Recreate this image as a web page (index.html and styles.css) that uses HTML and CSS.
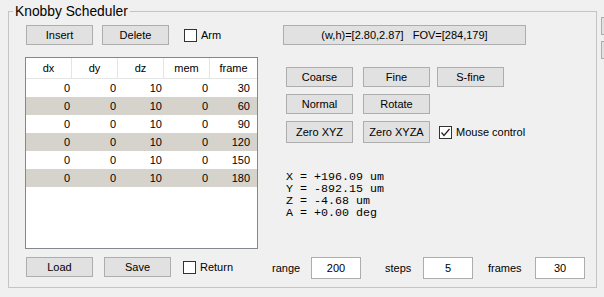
FILE: index.html
```html
<!DOCTYPE html>
<html>
<head>
<meta charset="utf-8">
<link rel="stylesheet" href="styles.css">
</head>
<body>
<div class="app">
  <div class="group">
    <span class="title">Knobby Scheduler</span>
    <div class="toprow">
      <div class="btn">Insert</div>
      <div class="btn gap9">Delete</div>
      <label class="chk armchk"><span class="box"></span>Arm</label>
      <div class="btn wide">(w,h)=[2.80,2.87]   FOV=[284,179]</div>
    </div>
    <div class="main">
      <div class="table">
        <div class="thead">
          <div class="th">dx</div><div class="th">dy</div><div class="th">dz</div><div class="th">mem</div><div class="th">frame</div>
        </div>
        <div class="tr"><div class="td">0</div><div class="td">0</div><div class="td">10</div><div class="td">0</div><div class="td last">30</div></div>
        <div class="tr alt"><div class="td">0</div><div class="td">0</div><div class="td">10</div><div class="td">0</div><div class="td last">60</div></div>
        <div class="tr"><div class="td">0</div><div class="td">0</div><div class="td">10</div><div class="td">0</div><div class="td last">90</div></div>
        <div class="tr alt"><div class="td">0</div><div class="td">0</div><div class="td">10</div><div class="td">0</div><div class="td last">120</div></div>
        <div class="tr"><div class="td">0</div><div class="td">0</div><div class="td">10</div><div class="td">0</div><div class="td last">150</div></div>
        <div class="tr alt"><div class="td">0</div><div class="td">0</div><div class="td">10</div><div class="td">0</div><div class="td last">180</div></div>
      </div>
      <div class="side">
        <div class="srow">
          <div class="btn">Coarse</div>
          <div class="btn gap10">Fine</div>
          <div class="btn gap7">S-fine</div>
        </div>
        <div class="srow">
          <div class="btn">Normal</div>
          <div class="btn gap10">Rotate</div>
        </div>
        <div class="srow tall">
          <div class="btn">Zero XYZ</div>
          <div class="btn gap10">Zero XYZA</div>
          <label class="chk mousechk"><span class="box checked"><svg width="11" height="11" viewBox="0 0 11 11"><path d="M1.5 5.5 L4 8.5 L9.5 2" fill="none" stroke="#222" stroke-width="1.2"/></svg></span>Mouse control</label>
        </div>
        <div class="readout">X = +196.09 um
Y = -892.15 um
Z = -4.68 um
A = +0.00 deg</div>
      </div>
    </div>
    <div class="bottomrow">
      <div class="btn">Load</div>
      <div class="btn gap11">Save</div>
      <label class="chk retchk"><span class="box"></span>Return</label>
      <span class="lbl lrange">range</span><div class="val">200</div>
      <span class="lbl lsteps">steps</span><div class="val">5</div>
      <span class="lbl lframes">frames</span><div class="val">30</div>
    </div>
  </div>
  <div class="edge">
    <span class="ebtn"></span>
    <span class="ebtn"></span>
  </div>
</div>
</body>
</html>
```

FILE: styles.css
```css
* { box-sizing: border-box; }
html, body {
  margin: 0;
  padding: 0;
  background: #f0f0f0;
  overflow: hidden;
}
body {
  font-family: "Liberation Sans", Arial, sans-serif;
  font-size: 11px;
  color: #000;
  width: 604px;
  height: 297px;
}
.app {
  display: flex;
  align-items: flex-start;
}
.group {
  position: relative;
  margin: 11px 0 0 8px;
  width: 589px;
  height: 277px;
  border: 1px solid #c4c4c4;
  padding: 13px 0 0 17px;
  flex: none;
}
.title {
  position: absolute;
  top: -8px;
  left: 4px;
  padding: 0 2px;
  background: #f0f0f0;
  font-size: 13.8px;
  line-height: 16px;
  color: #000;
}
.btn {
  width: 67px;
  height: 20px;
  border: 1px solid #adadad;
  background: #e1e1e1;
  text-align: center;
  line-height: 18px;
  white-space: pre;
  flex: none;
}
.gap7 { margin-left: 7px; }
.gap9 { margin-left: 9px; }
.gap10 { margin-left: 10px; }
.gap11 { margin-left: 11px; }
.toprow {
  display: flex;
  align-items: center;
  height: 20px;
}
.chk {
  display: flex;
  align-items: center;
  height: 20px;
  flex: none;
}
.box {
  width: 13px;
  height: 13px;
  border: 1px solid #333;
  background: #fff;
  margin-right: 4px;
  display: flex;
  align-items: center;
  justify-content: center;
  flex: none;
}
.armchk { margin-left: 15px; width: 99px; }
.wide { width: 243px; }
.main {
  display: flex;
  margin-top: 12px;
  height: 192px;
}
.table {
  width: 233px;
  height: 192px;
  margin-left: -1px;
  border: 1px solid #828790;
  background: #fff;
  flex: none;
}
.thead, .tr {
  display: grid;
  grid-template-columns: 46px 46px 46px 46px 47px;
}
.thead {
  height: 21px;
  border-bottom: 1px solid #e5e5e5;
}
.th {
  text-align: center;
  line-height: 20px;
  border-right: 1px solid #e5e5e5;
}
.th:last-child { border-right: none; }
.tr { height: 18px; }
.tr.alt { background: #d6d3cd; }
.td {
  text-align: right;
  line-height: 18px;
  padding-right: 2px;
}
.td.last { padding-right: 7px; }
.side {
  margin-left: 28px;
  padding-top: 10px;
  display: flex;
  flex-direction: column;
}
.srow {
  display: flex;
  align-items: center;
  height: 20px;
  margin-bottom: 7px;
}
.srow.tall { height: 22px; margin-bottom: 0; }
.srow.tall .btn { height: 22px; line-height: 20px; }
.mousechk { margin-left: 9px; }
.readout {
  margin-top: 28px;
  font-family: "Liberation Mono", "Courier New", monospace;
  font-size: 11.67px;
  line-height: 12px;
  white-space: pre;
}
.bottomrow {
  display: flex;
  align-items: flex-start;
  margin-top: 8px;
  height: 22px;
}
.retchk { margin-left: 12px; width: 89px; }
.lbl {
  line-height: 22px;
  flex: none;
}
.lrange { width: 39px; }
.lsteps { width: 38px; margin-left: 24px; }
.lframes { width: 47px; margin-left: 15px; }
.val {
  width: 50px;
  height: 22px;
  border: 1px solid #adadad;
  background: #fff;
  text-align: center;
  line-height: 20px;
  flex: none;
}
.edge {
  margin-left: 4px;
  padding-top: 17px;
  display: flex;
  flex-direction: column;
  gap: 6px;
  flex: none;
}
.ebtn {
  display: block;
  width: 30px;
  height: 18px;
  border: 1px solid #adadad;
  background: #e1e1e1;
}
```
